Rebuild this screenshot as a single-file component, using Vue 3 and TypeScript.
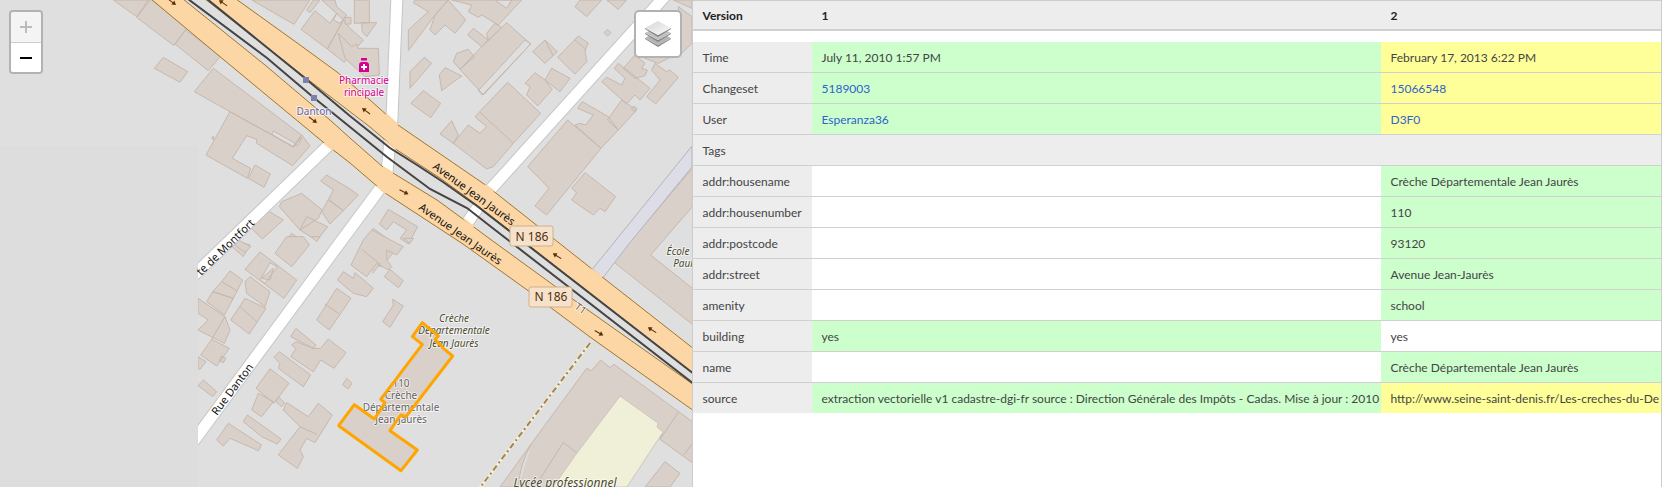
<script setup lang="ts">
interface Cell { text: string; kind: 'added' | 'changed' | 'same'; link?: boolean }
interface Row { label: string; cells: Cell[] }
interface Block { x: number; y: number; d: string }

const none: Cell = { text: '', kind: 'same' }
const added = (text: string, link = false): Cell => ({ text, kind: 'added', link })
const changed = (text: string, link = false): Cell => ({ text, kind: 'changed', link })

const meta: Row[] = [
  { label: 'Time', cells: [added('July 11, 2010 1:57 PM'), changed('February 17, 2013 6:22 PM')] },
  { label: 'Changeset', cells: [added('5189003', true), changed('15066548', true)] },
  { label: 'User', cells: [added('Esperanza36', true), changed('D3F0', true)] },
]

const tags: Row[] = [
  { label: 'addr:housename', cells: [none, added('Crèche Départementale Jean Jaurès')] },
  { label: 'addr:housenumber', cells: [none, added('110')] },
  { label: 'addr:postcode', cells: [none, added('93120')] },
  { label: 'addr:street', cells: [none, added('Avenue Jean-Jaurès')] },
  { label: 'amenity', cells: [none, added('school')] },
  { label: 'building', cells: [added('yes'), { text: 'yes', kind: 'same' }] },
  { label: 'name', cells: [none, added('Crèche Départementale Jean Jaurès')] },
  {
    label: 'source',
    cells: [
      added('extraction vectorielle v1 cadastre-dgi-fr source : Direction Générale des Impôts - Cadas. Mise à jour : 2010'),
      changed('http://www.seine-saint-denis.fr/Les-creches-du-De'),
    ],
  },
]

// Outline of the nursery building, in thirds of a pixel from (190, 240).
const nursery = 'M697 248L667 290L697 313L572 478L585 488L553 537L493 494L446 557L633 692L682 630L600 572L632 525L648 530L788 348L760 325L735 298L745 288Z'

// Building footprints, grouped by map sector; path units are a third of a pixel.
const sectors: Block[] = [
  {
    x: 0, y: 0,
    d: `M340 0L410 50L445 0Z M450 0L410 52L522 137L560 85L455 0Z M556 90L525 132L625 212L662 168Z
    M490 172L563 215L540 247L463 205Z M640 205L583 275L690 335L880 440L905 405Z
    M905 405L930 437L878 497L770 430L770 418L740 407L697 475L752 505L742 535L618 465L690 335L880 440Z
    M820 393L885 430L880 442L815 403Z M905 412L885 437L895 435Z M640 408L635 415L642 420Z
    M765 495L811 522L792 562L745 535Z M905 580L967 630L955 655L900 690L838 620L845 605Z
    M920 650L983 680L950 722L900 690Z M980 525L962 543L1000 570L985 600L1030 632L1075 585L1050 567Z
    M985 598L965 635L990 672L1030 632Z M800 630L850 660L787 717L755 685Z M875 700L925 735L900 760L850 735Z
    M700 720L750 735L730 770L690 735Z M755 0L882 73L930 0Z
    M945 32L990 70L1010 40L1030 60L982 147L903 88Z M1030 60L982 147L1033 187L1090 120L1050 85Z
    M920 30L940 0L960 0L930 38Z M965 0L1010 40L1000 60L1020 70L1040 45L1010 20L1005 0Z`,
  },
  {
    x: 345, y: 0,
    d: `M28 0H73V68L28 70Z M0 52H18V72H0Z M50 68L95 68L65 110L52 95Z M-20 100L20 140L35 132L38 145H100L103 225L60 230L0 175Z
    M190 90L250 35L205 8L210 0H310L270 45L190 152Z M310 0L362 60L330 100L300 75L270 105L255 90L270 45Z
    M320 0H530L460 75L410 45L400 52L370 35L380 15Z M450 0L485 25L500 0Z M385 85L430 120L410 140L368 105Z
    M425 100L450 70L470 82L430 122Z M485 68L557 132L415 285L345 208L410 140Z M540 120L400 272L412 285L557 132Z
    M370 148L388 170L345 208L325 185L335 160Z M238 172L260 190L195 265V215Z M300 203L350 228L290 272L283 225Z
    M235 272L287 310L257 353L198 310Z M488 247L587 340L505 430L445 500L425 507L325 430L370 375L405 400L425 380L390 350Z
    M405 337L505 430 M320 362L340 405L325 430L285 402Z M600 120L637 155L600 190L563 155Z M600 120L625 168
    M700 108L730 130L720 150L725 185L690 222L638 172Z M690 120L725 150 M570 218L600 240L622 268L578 318L545 285L555 260L540 250Z
    M620 205L675 235L645 275L600 240Z M668 360L768 445L605 645L570 618L612 565L548 500Z
    M768 445L690 375L705 370L722 375L745 345L698 325L712 305L790 350L820 390Z M830 300L875 330L820 390L787 360Z
    M868 318L876 326L868 335L859 326Z M820 190L915 265L885 300L870 285L845 312L770 245L785 232L830 255L840 235L808 205Z
    M870 165L900 190L890 205L907 210L900 227L870 235L835 205Z M930 190L965 215L975 210L1000 232L932 312L905 290L945 240L920 210Z
    M870 160H1000L940 190L900 175Z M720 518L812 590L780 635L765 625L745 645L680 600L695 578L680 565Z
    M690 20L725 50L770 0H705Z M785 0L820 28L845 0Z M985 0L1041 25V0Z M1000 20L1041 50V130L1010 160Z M788 88L798 98L788 108L777 98Z
    M130 628L218 680L190 732L165 715L185 690L145 665L125 690L103 672Z M85 685L160 740L110 800L35 780Z`,
  },
  {
    x: 190, y: 240,
    d: `M210 36L320 120L282 175L165 88Z M240 68L210 120L225 130L262 80Z M250 85L240 120L215 115Z
    M165 125L180 110L240 155L225 200L170 160Z M120 93L158 120L130 175L68 155L95 125Z M95 125L140 152 M68 155L130 175L103 225L50 185Z
    M165 175L228 205L178 282L122 240Z M150 200L200 245 M24 175L105 230L120 270L103 310L24 270L55 240L24 220Z M105 230L65 298
    M65 298L118 325L80 378L32 345Z M95 348L108 355L100 368L88 362Z M24 350L48 365L30 388L24 385Z M40 420L80 455L68 470L24 437Z
    M290 -10H340L358 15L305 80L255 40Z M145 0L182 20L165 37L135 15Z M440 145L483 175L418 270L380 240Z M405 192L448 222
    M460 95L490 115L495 98L550 145L530 170L490 160L442 120Z M520 0L545 -30L640 20L620 45L590 30L590 60L605 80L595 90L560 70L530 110L483 75Z
    M515 28L570 72L548 100 M600 88L640 122L625 143L583 110Z M608 178L640 198L600 262L578 245L610 195Z
    M640 -5L660 10L670 -5Z M365 -10L380 5L390 -10Z M318 265L378 315L370 325L302 290Z
    M318 305L370 325L392 325L415 297L468 338L432 385L392 360L370 395L302 350L318 325L305 315Z
    M268 335L362 405L340 440L265 385L270 370L252 352Z M240 386L297 430L252 490L198 445Z
    M205 460L250 485L215 530L185 510Z M265 470L285 490L275 500L258 485Z M290 488L355 530L385 490L427 525L375 608L350 595L330 630L340 650L322 685L265 645L330 560L280 510Z
    M330 560L380 583 M115 550L215 615L205 632L120 595L100 618L80 600Z M172 525L273 597L262 612L215 590L160 545Z
    M470 415L486 430L475 447L458 435Z ${nursery}`,
  },
  {
    x: 440, y: 240,
    d: `M757 -215L520 65L757 253V145L632 45L757 -100Z
    M180 741L275 610L440 385L455 392L482 360L510 383L522 373L757 545V668L660 598L668 577L540 468L340 741Z
    M275 610Q240 670 235 741 M715 517L660 598 M757 610L732 645 M285 741L370 607L412 640 M675 665L720 700L690 741H615Z`,
  },
]

const arrows = [
  { x: 172, y: 2, r: 37 }, { x: 223, y: 3, r: 214 }, { x: 313, y: 120, r: 37 }, { x: 366, y: 111, r: 217 },
  { x: 404, y: 192, r: 27 }, { x: 557, y: 256, r: 212 }, { x: 652, y: 330, r: 212 }, { x: 599, y: 333, r: 30 },
]
</script>

<template>
  <main class="history">
    <section class="map" aria-label="Map">
      <svg class="tiles" aria-hidden="true">
        <defs>
          <clipPath id="loaded"><path d="M0 0H2000V2000H198V146H0Z" /></clipPath>
          <linearGradient id="sheet" x1="0" y1="0" x2="1" y2="1">
            <stop offset="0" stop-color="#d5d5d5" /><stop offset="1" stop-color="#fafafa" />
          </linearGradient>
        </defs>
        <g clip-path="url(#loaded)">
          <rect class="land" width="100%" height="100%" />
          <g v-for="(s, i) in sectors" :key="i" :transform="`translate(${s.x} ${s.y}) scale(0.33333)`">
            <path class="building" :d="s.d" />
          </g>
          <path class="pitch" d="M620 396L658 423L657 427L663 432L627 487H553L577 453Z" />
          <path class="plaza" d="M692 146L612 245L590 272L602 279L628 245L692 167Z" />
          <g class="street-edge">
            <path d="M397 -5L392 118L387 172" /><path d="M382 186L342 240L190 446" />
            <path d="M330 144L190 279" /><path d="M666 -5L490 190L465 226" />
          </g>
          <g class="street">
            <path d="M397 -5L392 118L387 172" /><path d="M382 186L342 240L190 446" />
            <path d="M330 144L190 279" /><path d="M666 -5L490 190L465 226" />
          </g>
          <path class="avenue" d="M205 -1H236L300 45L337 72L370 100L398 125L487 186L592 269L694 349V374L477 205L440 178L397 150L370 127L306 78Z" />
          <path class="avenue" d="M151 -1H183L265 65L330 120L350 138L383 167L393 173L437 200L463 219L490 239L585 308L694 385V411L590 337L530 292L463 244L385 193L350 163L323 142L218 55Z" />
          <path class="avenue-join" d="M386 114L398 125 M385 141L396 149 M383 167L393 173 M324 143L333 150 M377 186L386 193 M485 185L494 191 M464 219L474 227 M591 269L602 277" />
          <path class="rail" d="M188 -1L267 58L313 97L350 127L387 157L430 189L467 208L490 226L694 384" />
          <path class="rail" d="M207 -1L306 79L350 116L390 148L417 165L443 182L477 206L694 374" />
          <path class="stop" d="M303 77h6v6h-6z M311 95h6v6h-6z" />
          <path class="footway-bed" d="M590 343L479 489" />
          <path class="footway" d="M590 343L479 489" />
          <path v-for="(a, i) in arrows" :key="i" class="arrow" :transform="`translate(${a.x} ${a.y}) rotate(${a.r})`" d="M-5 -.5H1V-2.5L5 0L1 2.5V.5H-5Z" />
          <path class="pharmacy" d="M361 58H367V60.5H361Z M359 72V65Q359 62 362 62H366Q369 62 369 65V72Z" />
          <path class="pharmacy-cross" d="M364 64V70M361 67H367" />
        </g>
        <g class="labels">
          <g class="poi"><text x="364" y="84">Pharmacie</text><text x="364" y="96">rincipale</text></g>
          <text class="station" x="314" y="115">Danton</text>
          <g class="road-name">
            <text transform="translate(432 168) rotate(36)">Avenue Jean Jaurès</text>
            <text transform="translate(418 209) rotate(35)">Avenue Jean Jaurès</text>
            <text transform="translate(217 416) rotate(-53)">Rue Danton</text>
            <text transform="translate(201 276) rotate(-44)">te de Montfort</text>
          </g>
          <g class="shield">
            <rect x="510" y="226" width="43" height="20" rx="2" /><text x="532" y="241">N 186</text>
            <rect x="529" y="287" width="43" height="20" rx="2" /><text x="551" y="301">N 186</text>
          </g>
          <text class="tram" transform="translate(574 308) rotate(35)">T1</text>
          <g class="school">
            <text x="454" y="322">Crèche</text><text x="454" y="334">Départementale</text><text x="454" y="347">Jean Jaurès</text>
            <text x="678" y="255">École</text><text x="683" y="267">Paul</text>
            <text class="lycee" x="565" y="487">Lycée professionnel</text>
          </g>
          <g class="house">
            <text x="401" y="387">110</text><text x="401" y="399">Crèche</text><text x="401" y="411">Départementale</text><text x="401" y="423">Jean Jaurès</text>
          </g>
        </g>
        <g transform="translate(190 240) scale(0.33333)">
          <path class="selected" :d="nursery" />
        </g>
      </svg>

      <div class="zoom">
        <button type="button" disabled aria-label="Zoom in">
          <svg width="14" height="14"><path d="M7 1V13M1 7H13" /></svg>
        </button>
        <button type="button" aria-label="Zoom out">
          <svg width="14" height="14"><path d="M1 7H13" /></svg>
        </button>
      </div>
      <button type="button" class="layers" aria-label="Layers">
        <svg width="26" height="26" viewBox="0 0 26 26">
          <path fill="#8c8c8c" d="M0 17L13 24L26 17V18L13 26L0 18Z" /><path fill="#b5b5b5" d="M0 17L4 15L13 20L22 15L26 17L13 24Z" />
          <path fill="#858585" d="M0 12L13 19L26 12V13L13 21L0 13Z" /><path fill="#c2c2c2" d="M0 12L4 10L13 15L22 10L26 12L13 19Z" />
          <path fill="#858585" d="M0 7L13 14L26 7V8L13 16L0 8Z" /><path fill="url(#sheet)" d="M0 7L13 0L26 7L13 14Z" />
        </svg>
      </button>
    </section>

    <section class="panel">
      <table>
        <colgroup><col class="col-key"><col class="col-first"><col></colgroup>
        <thead>
          <tr><th scope="col">Version</th><th scope="col">1</th><th scope="col">2</th></tr>
        </thead>
        <tbody>
          <tr class="gap" aria-hidden="true"><td colspan="3"></td></tr>
          <tr v-for="row in meta" :key="row.label">
            <th scope="row">{{ row.label }}</th>
            <td v-for="(c, i) in row.cells" :key="i" :class="c.kind">
              <a v-if="c.link" href="#">{{ c.text }}</a><template v-else>{{ c.text }}</template>
            </td>
          </tr>
          <tr><th scope="rowgroup" colspan="3">Tags</th></tr>
          <tr v-for="row in tags" :key="row.label">
            <th scope="row">{{ row.label }}</th>
            <td v-for="(c, i) in row.cells" :key="i" :class="c.kind">{{ c.text }}</td>
          </tr>
        </tbody>
      </table>
    </section>
  </main>
</template>

<style>
body { margin: 0; background: #fff; }
</style>

<style scoped>
.history {
  display: grid;
  grid-template-columns: minmax(0, 5fr) minmax(0, 7fr);
  min-height: 100vh;
  font-family: Lato, "Open Sans", sans-serif;
  font-size: 12px;
  color: #444;
}
.map { position: relative; overflow: hidden; background: #ddd; }
.tiles { position: absolute; inset: 0; width: 100%; height: 100%; font-family: "Noto Sans", sans-serif; }
.land { fill: #dfdfdf; }
.building { fill: #d9d0c9; stroke: #c6b8ae; stroke-width: 1px; vector-effect: non-scaling-stroke; }
.pitch { fill: #f0f0d8; stroke: #cfc6bd; }
.plaza { fill: #dddde8; stroke: #b5b3bd; }
.street, .street-edge { fill: none; stroke-width: 11px; stroke: #fff; }
.street-edge { stroke: #c6c6c6; stroke-width: 13px; }
.avenue { fill: #fcd6a4; stroke: #a0762a; stroke-width: 1px; }
.avenue-join { fill: none; stroke: #fcd6a4; stroke-width: 2px; }
.rail { fill: none; stroke: #444; stroke-width: 2px; }
.stop { fill: #7981b0; }
.footway, .footway-bed { fill: none; stroke: #a38748; stroke-width: 2px; stroke-dasharray: 6 3 2 3; }
.footway-bed { stroke: #f3eee0; stroke-width: 3px; stroke-dasharray: none; }
.arrow { fill: #5c3000; }
.pharmacy { fill: #d6008f; }
.pharmacy-cross { fill: none; stroke: #fff; stroke-width: 2px; }
.labels text { paint-order: stroke; stroke: rgba(255, 255, 255, .6); stroke-width: 2px; stroke-linejoin: round; text-anchor: middle; font-size: 10px; }
.poi { fill: #d6008f; }
.station { fill: #6068b0; }
.labels .road-name text { fill: #111; font-size: 11px; text-anchor: start; stroke: none; }
.shield rect { fill: #f6e1cb; stroke: #cfb08f; }
.labels .shield text { fill: #50300f; font-size: 12px; stroke: none; }
.labels .tram { fill: #666; text-anchor: start; }
.school { fill: #4b4b30; font-style: italic; }
.labels .school .lycee { font-size: 12px; }
.house { fill: #666; }
.selected { fill: none; stroke: #ffa500; stroke-width: 3px; vector-effect: non-scaling-stroke; stroke-linejoin: round; }

.zoom { position: absolute; top: 10px; left: 9px; border: 2px solid #b2b2b2; border-radius: 4px; overflow: hidden; }
.zoom button { display: flex; align-items: center; justify-content: center; width: 30px; height: 30px; padding: 0; border: 0; background: #fff; color: #000; }
.zoom button + button { border-top: 1px solid #ccc; }
.zoom button:disabled { background: #f4f4f4; color: #bbb; }
.zoom path { fill: none; stroke: currentColor; stroke-width: 2px; }
.layers { position: absolute; top: 10px; right: 11px; display: flex; align-items: center; justify-content: center; box-sizing: border-box; width: 48px; height: 48px; padding: 0; background: #fff; border: 2px solid #b2b2b2; border-radius: 5px; }

.panel { border-left: 1px solid #ccc; border-right: 1px solid #ccc; margin-left: -1px; position: relative; background: #fff; overflow: hidden; }
table { width: 100%; table-layout: fixed; border-collapse: separate; border-spacing: 0; }
.col-key { width: 119px; }
.col-first { width: 569px; }
th, td { box-sizing: border-box; height: 31px; padding: 2px 8px 0 10px; text-align: left; vertical-align: middle; line-height: 18px; white-space: nowrap; overflow: hidden; border-bottom: 1px solid #d0d0d0; }
th { background: #ededed; font-weight: 400; }
thead th { font-weight: 700; color: #222; border-top: 1px solid #ccc; border-bottom: 2px solid #d0d0d0; }
.gap td { height: 11px; padding: 0; border: 0; line-height: 0; }
tbody tr:last-child th, tbody tr:last-child td { height: 30px; border-bottom: 0; }
.added { background: #cfc; }
.changed { background: #ff9; }
.same { background: #fff; }
a { color: #2f62cc; text-decoration: none; }
</style>
